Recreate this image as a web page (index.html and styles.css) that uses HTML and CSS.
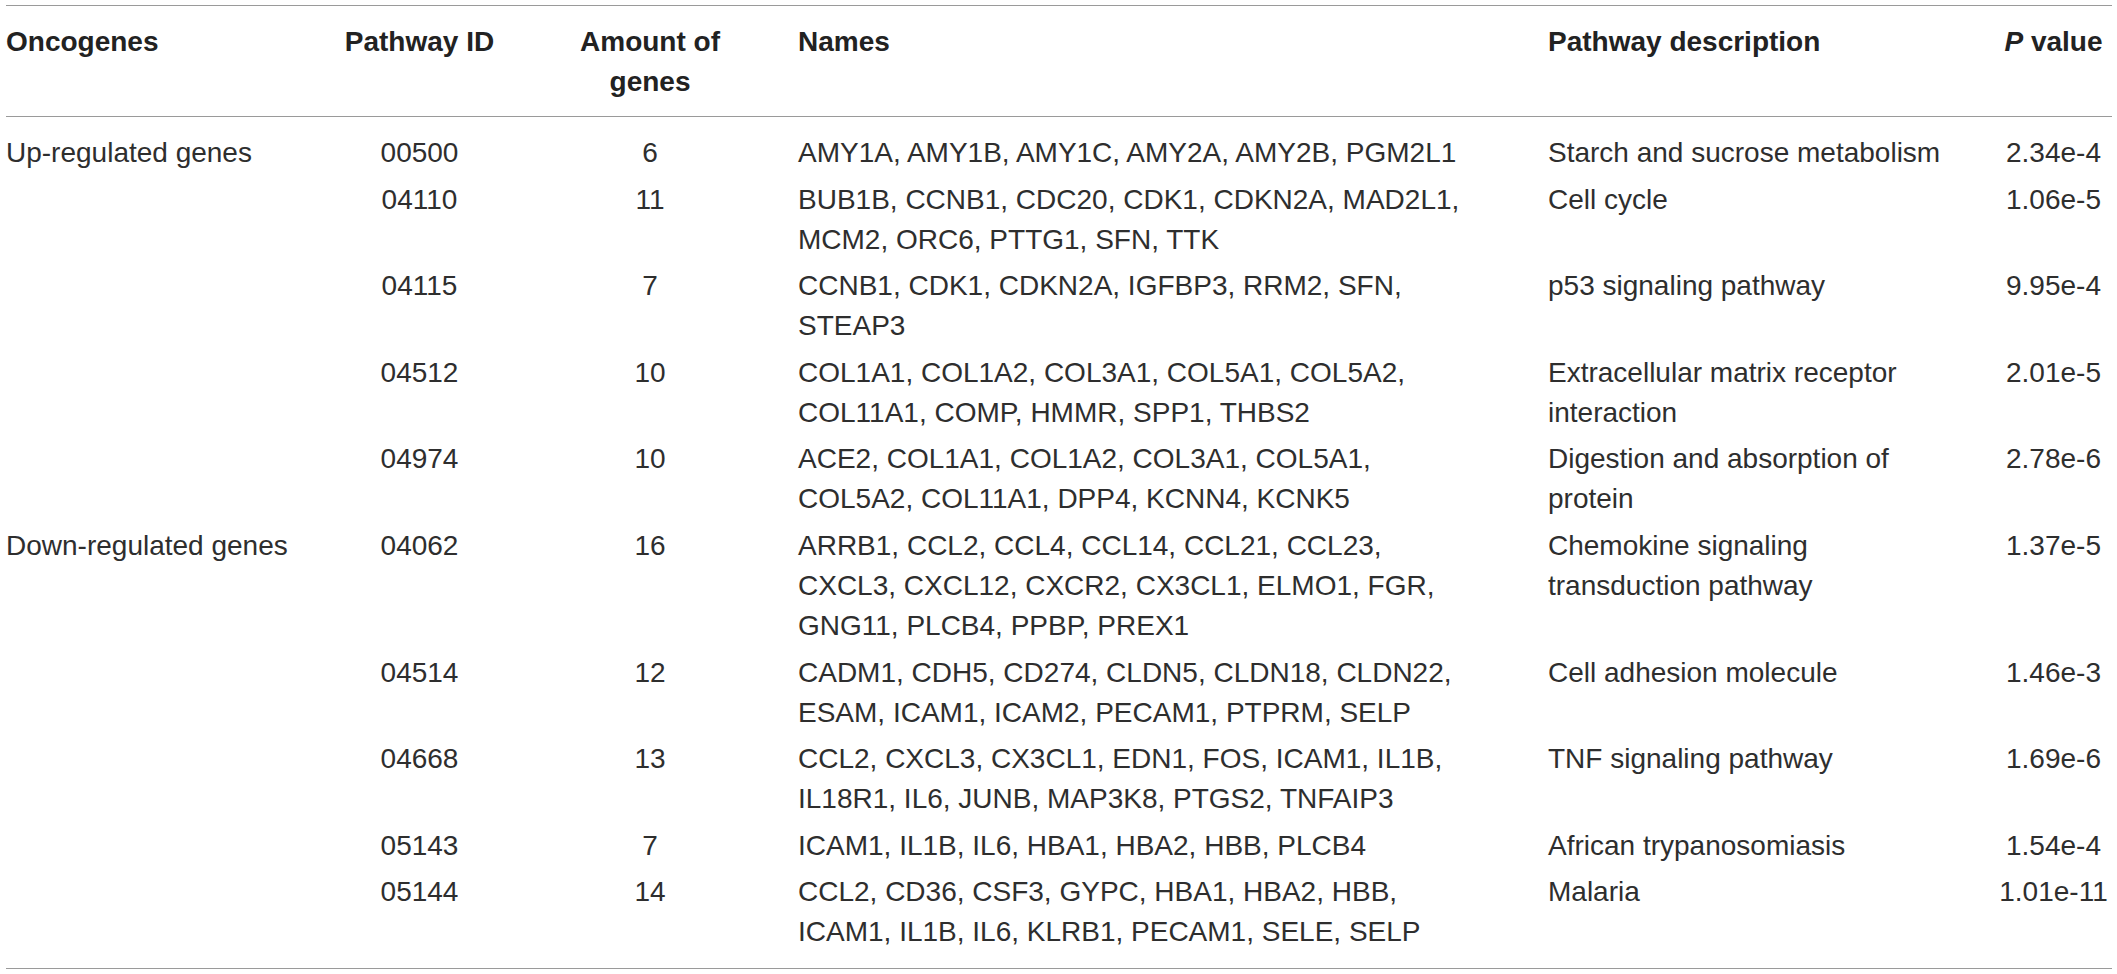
FILE: index.html
```html
<!DOCTYPE html>
<html lang="en">
<head>
<meta charset="utf-8">
<title>KEGG pathway enrichment</title>
<link rel="stylesheet" href="styles.css">
</head>
<body>
<table class="kegg">
  <thead>
    <tr>
      <th class="c-onc">Oncogenes</th>
      <th class="c-id">Pathway ID</th>
      <th class="c-amt">Amount of genes</th>
      <th class="c-names">Names</th>
      <th class="c-desc">Pathway description</th>
      <th class="c-p"><i>P</i> value</th>
    </tr>
  </thead>
  <tbody>
    <tr>
      <td class="c-onc">Up-regulated genes</td>
      <td class="c-id">00500</td>
      <td class="c-amt">6</td>
      <td class="c-names">AMY1A, AMY1B, AMY1C, AMY2A, AMY2B, PGM2L1</td>
      <td class="c-desc">Starch and sucrose metabolism</td>
      <td class="c-p">2.34e-4</td>
    </tr>
    <tr>
      <td class="c-onc"></td>
      <td class="c-id">04110</td>
      <td class="c-amt">11</td>
      <td class="c-names">BUB1B, CCNB1, CDC20, CDK1, CDKN2A, MAD2L1, MCM2, ORC6, PTTG1, SFN, TTK</td>
      <td class="c-desc">Cell cycle</td>
      <td class="c-p">1.06e-5</td>
    </tr>
    <tr>
      <td class="c-onc"></td>
      <td class="c-id">04115</td>
      <td class="c-amt">7</td>
      <td class="c-names">CCNB1, CDK1, CDKN2A, IGFBP3, RRM2, SFN, STEAP3</td>
      <td class="c-desc">p53 signaling pathway</td>
      <td class="c-p">9.95e-4</td>
    </tr>
    <tr>
      <td class="c-onc"></td>
      <td class="c-id">04512</td>
      <td class="c-amt">10</td>
      <td class="c-names">COL1A1, COL1A2, COL3A1, COL5A1, COL5A2, COL11A1, COMP, HMMR, SPP1, THBS2</td>
      <td class="c-desc">Extracellular matrix receptor interaction</td>
      <td class="c-p">2.01e-5</td>
    </tr>
    <tr>
      <td class="c-onc"></td>
      <td class="c-id">04974</td>
      <td class="c-amt">10</td>
      <td class="c-names">ACE2, COL1A1, COL1A2, COL3A1, COL5A1, COL5A2, COL11A1, DPP4, KCNN4, KCNK5</td>
      <td class="c-desc">Digestion and absorption of protein</td>
      <td class="c-p">2.78e-6</td>
    </tr>
    <tr>
      <td class="c-onc">Down-regulated genes</td>
      <td class="c-id">04062</td>
      <td class="c-amt">16</td>
      <td class="c-names">ARRB1, CCL2, CCL4, CCL14, CCL21, CCL23, CXCL3, CXCL12, CXCR2, CX3CL1, ELMO1, FGR, GNG11, PLCB4, PPBP, PREX1</td>
      <td class="c-desc">Chemokine signaling transduction pathway</td>
      <td class="c-p">1.37e-5</td>
    </tr>
    <tr>
      <td class="c-onc"></td>
      <td class="c-id">04514</td>
      <td class="c-amt">12</td>
      <td class="c-names">CADM1, CDH5, CD274, CLDN5, CLDN18, CLDN22, ESAM, ICAM1, ICAM2, PECAM1, PTPRM, SELP</td>
      <td class="c-desc">Cell adhesion molecule</td>
      <td class="c-p">1.46e-3</td>
    </tr>
    <tr>
      <td class="c-onc"></td>
      <td class="c-id">04668</td>
      <td class="c-amt">13</td>
      <td class="c-names">CCL2, CXCL3, CX3CL1, EDN1, FOS, ICAM1, IL1B, IL18R1, IL6, JUNB, MAP3K8, PTGS2, TNFAIP3</td>
      <td class="c-desc">TNF signaling pathway</td>
      <td class="c-p">1.69e-6</td>
    </tr>
    <tr>
      <td class="c-onc"></td>
      <td class="c-id">05143</td>
      <td class="c-amt">7</td>
      <td class="c-names">ICAM1, IL1B, IL6, HBA1, HBA2, HBB, PLCB4</td>
      <td class="c-desc">African trypanosomiasis</td>
      <td class="c-p">1.54e-4</td>
    </tr>
    <tr>
      <td class="c-onc"></td>
      <td class="c-id">05144</td>
      <td class="c-amt">14</td>
      <td class="c-names">CCL2, CD36, CSF3, GYPC, HBA1, HBA2, HBB, ICAM1, IL1B, IL6, KLRB1, PECAM1, SELE, SELP</td>
      <td class="c-desc">Malaria</td>
      <td class="c-p">1.01e-11</td>
    </tr>
  </tbody>
</table>
</body>
</html>
```
FILE: styles.css
```css
html, body {
  margin: 0;
  padding: 0;
  background: #ffffff;
}

.kegg {
  margin: 5px 0 0 6px;
  width: 2106px;
  table-layout: fixed;
  border-collapse: separate;
  border-spacing: 0;
  font-family: "Liberation Sans", Arial, Helvetica, sans-serif;
  font-size: 28px;
  line-height: 40px;
  color: #2e2e2e;
}

.kegg th,
.kegg td {
  box-sizing: border-box;
  vertical-align: top;
  padding-top: 3.3px;
  padding-bottom: 3.3px;
  text-align: left;
}

.kegg th {
  font-weight: bold;
  color: #222222;
  padding-top: 16px;
  padding-bottom: 14px;
  border-top: 1px solid #9a9a9a;
  border-bottom: 1px solid #9a9a9a;
}

.kegg th i {
  font-style: italic;
}

.kegg tbody tr:first-child td {
  padding-top: 16px;
}

.kegg tbody tr:last-child td {
  padding-bottom: 15.6px;
  border-bottom: 1px solid #9a9a9a;
}

.kegg .c-onc {
  width: 294px;
  padding-left: 0;
  padding-right: 0;
}

.kegg .c-id {
  width: 239px;
  text-align: center;
}

.kegg .c-amt {
  width: 222px;
  padding-left: 20px;
  padding-right: 20px;
  text-align: center;
}

.kegg .c-names {
  width: 750px;
  padding-left: 37px;
  padding-right: 33px;
}

.kegg .c-desc {
  width: 484px;
  padding-left: 37px;
  padding-right: 42px;
}

.kegg .c-p {
  width: 117px;
  text-align: center;
  white-space: nowrap;
}
```
